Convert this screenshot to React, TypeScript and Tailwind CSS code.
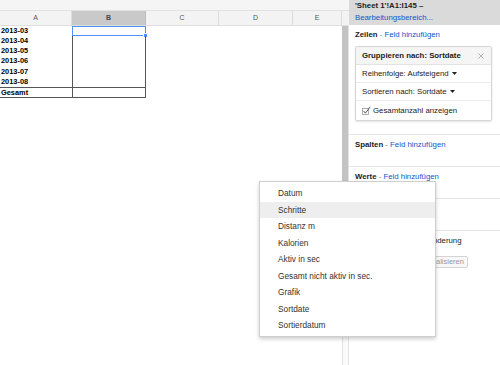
import React from "react";

const menuItems = [
  "Datum",
  "Schritte",
  "Distanz m",
  "Kalorien",
  "Aktiv in sec",
  "Gesamt nicht aktiv in sec.",
  "Grafik",
  "Sortdate",
  "Sortierdatum",
];

const rows = ["2013-03", "2013-04", "2013-05", "2013-06", "2013-07", "2013-08"];

function Caret() {
  return (
    <svg width="5" height="3" viewBox="0 0 5 3" className="ml-[3px] inline-block">
      <path d="M0 0 L5 0 L2.5 3 Z" fill="#222" />
    </svg>
  );
}

function FieldLine({ label }: { label: string }) {
  return (
    <div className="leading-[10px] h-[10px] whitespace-nowrap">
      <span className="font-bold text-[#222]">{label}</span>
      <span className="text-[#777]"> - </span>
      <span className="text-[#1155cc]">Feld hinzufügen</span>
    </div>
  );
}

export default function App() {
  return (
    <div className="relative w-[500px] h-[365px] overflow-hidden bg-white font-['Liberation_Sans',Arial,sans-serif] flex">
      {/* Spreadsheet side */}
      <div className="w-[349px] h-full flex flex-col">
        <div className="h-[11px] bg-[#f5f5f5] border-b border-[#e2e2e2]" />
        <div className="h-[15px] flex bg-[#f3f3f3] border-b border-[#dedede] text-[7px] text-[#555]">
          <div className="w-[72px] border-r border-[#dcdcdc] flex items-center justify-center">A</div>
          <div className="w-[74px] border-r border-[#bdbdbd] bg-[#c9c9c9] flex items-center justify-center font-bold text-[#444]">B</div>
          <div className="w-[73px] border-r border-[#dcdcdc] flex items-center justify-center">C</div>
          <div className="w-[74px] border-r border-[#dcdcdc] flex items-center justify-center">D</div>
          <div className="w-[49px] border-r border-[#dcdcdc] flex items-center justify-center">E</div>
          <div className="flex-1" />
        </div>
        <div className="flex-1 flex">
          <div className="w-[342px] text-[7.4px] font-bold text-black">
            {rows.map((r, i) => (
              <div key={r} className="flex h-[10.17px]">
                <div className="w-[72px] pl-[1px] leading-[10px]">{r}</div>
                <div className="w-[74px] border-x border-[#555] relative">
                  {i === 0 && (
                    <div className="absolute top-0 bottom-0 -left-px -right-px border border-[#4d90fe]">
                      <div className="absolute -right-[3px] -bottom-[3px] w-[5px] h-[5px] bg-[#4d90fe] border border-white" />
                    </div>
                  )}
                </div>
              </div>
            ))}
            <div className="flex w-[146px] h-[11px] border-y border-[#555]">
              <div className="w-[72px] pl-[1px] leading-[9px]">Gesamt</div>
              <div className="w-[74px] border-x border-[#555]" />
            </div>
          </div>
          <div className="w-[7px] h-full bg-[#fafafa] border-x border-[#e3e3e3] flex flex-col">
            <div className="-ml-px w-[6px] h-[225px] bg-[#c3c3c3]" />
          </div>
        </div>
      </div>

      {/* Right panel */}
      <div className="w-[151px] h-full flex flex-col text-[7.8px] text-[#222]">
        <div className="h-[25px] bg-[#dadada] px-[6px] pt-[1px]">
          <div className="h-[9px] leading-[9px] font-bold whitespace-nowrap">'Sheet 1'!A1:I145 –</div>
          <div className="h-[9px] leading-[9px] mt-[3px] text-[#1155cc] whitespace-nowrap">Bearbeitungsbereich...</div>
        </div>

        <div className="h-[110px] border-b border-[#e5e5e5] px-[6px] pt-[5px]">
          <FieldLine label="Zeilen" />
          <div className="mt-[6px] mr-[2px] h-[75px] border border-[#d6d6d6] rounded-[2px] shadow-[0_1px_2px_rgba(0,0,0,0.12)] flex flex-col">
            <div className="h-[18px] bg-[#f5f5f5] border-b border-[#e3e3e3] flex items-center justify-between px-[6px]">
              <span className="font-bold whitespace-nowrap">Gruppieren nach: Sortdate</span>
              <svg width="6" height="6" viewBox="0 0 6 6" className="mr-[1px]">
                <path d="M0.5 0.5 L5.5 5.5 M5.5 0.5 L0.5 5.5" stroke="#aaa" strokeWidth="0.9" />
              </svg>
            </div>
            <div className="h-[18px] border-b border-[#ececec] flex items-center px-[6px] whitespace-nowrap">
              Reihenfolge: Aufsteigend <Caret />
            </div>
            <div className="h-[18px] border-b border-[#ececec] flex items-center px-[6px] whitespace-nowrap">
              Sortieren nach: Sortdate <Caret />
            </div>
            <div className="flex-1 flex items-center px-[6px] whitespace-nowrap">
              <svg width="9" height="9" viewBox="0 0 9 9" className="mr-[2px]">
                <rect x="0.5" y="2.5" width="6" height="6" fill="white" stroke="#999" strokeWidth="0.8" />
                <path d="M1.6 5 L3.4 7.2 L8.2 0.8" fill="none" stroke="#555" strokeWidth="1" />
              </svg>
              Gesamtanzahl anzeigen
            </div>
          </div>
        </div>

        <div className="h-[32px] border-b border-[#e5e5e5] px-[6px] pt-[5px]">
          <FieldLine label="Spalten" />
        </div>
        <div className="h-[32px] border-b border-[#e5e5e5] px-[6px] pt-[5px]">
          <FieldLine label="Werte" />
        </div>
        <div className="h-[32px] border-b border-[#e5e5e5] px-[6px] pt-[5px]">
          <div className="leading-[10px] h-[10px] whitespace-nowrap font-bold">Filter</div>
        </div>
        <div className="flex-1 px-[6px] pt-[5px]">
          <div className="h-[10px] leading-[10px] flex items-center whitespace-nowrap">
            <span className="w-[7px] h-[7px] border border-[#999] mr-[2px] inline-block" />
            Aktualisierung bei Änderung
          </div>
          <div className="mt-[10px] ml-[62px] w-[51px] h-[12px] border border-[#d4d4d4] rounded-[2px] bg-[#f8f8f8] text-[7.5px] text-[#999] flex items-center justify-center whitespace-nowrap">
            Aktualisieren
          </div>
        </div>
      </div>

      {/* Dropdown menu overlay */}
      <div className="absolute left-[259px] top-[181px] w-[177px] h-[156px] bg-white border border-[#cfcfcf] shadow-[0_2px_4px_rgba(0,0,0,0.2)] pt-[3px]">
        {menuItems.map((item, i) => (
          <div
            key={item}
            className={`h-[16.5px] flex items-center pl-[18px] text-[8.3px] text-[#333] whitespace-nowrap ${i === 1 ? "bg-[#eeeeee]" : ""}`}
          >
            {item}
          </div>
        ))}
      </div>
    </div>
  );
}
